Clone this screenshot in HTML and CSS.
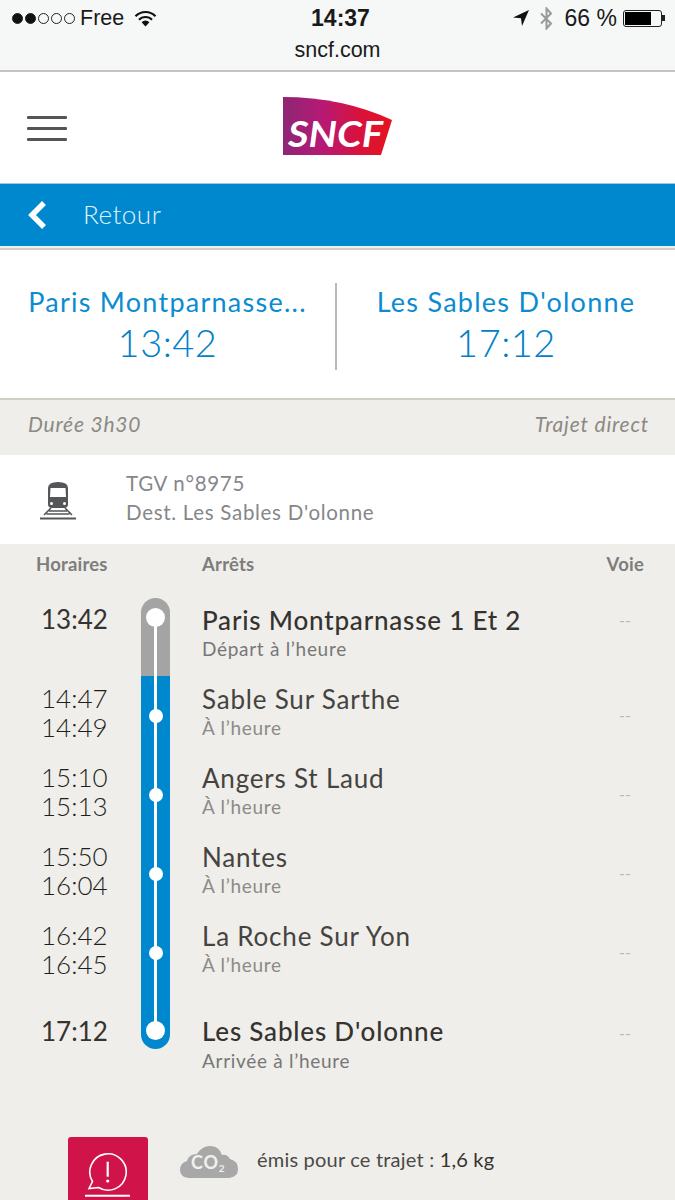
FILE: index.html
```html
<!DOCTYPE html>
<html lang="fr">

<head>
    <meta charset="UTF-8">
    <meta name="viewport" content="width=device-width, initial-scale=1.0">
    <title>SNCF - Retour</title>
    <link rel="stylesheet" href="styles.css">
</head>

<body>
    <div class="browserbar">
        <div class="statusline">
            <div class="statusleft">
                <span class="signal"><i class="on"></i><i class="on"></i><i></i><i></i><i></i></span>
                <span class="carrier">Free</span>
                <svg class="wifi" width="23" height="17" viewBox="0 0 23 17">
                    <path d="M1.500 6.200a14 14 0 0 1 20 0" fill="none" stroke="#111" stroke-width="2.200"/>
                    <path d="M5 9.800a9 9 0 0 1 13 0" fill="none" stroke="#111" stroke-width="2.200"/>
                    <path d="M7.600 12.200a5.400 5.400 0 0 1 7.800 0L11.500 16.500z" fill="#111"/>
                </svg>
            </div>
            <div class="clock">14:37</div>
            <div class="statusright">
                <svg width="16" height="16" viewBox="0 0 16 16"><path d="M16 0L0 7.500L8 8.200L9 16z" fill="#111"/></svg>
                <svg class="bluetooth" width="15" height="23" viewBox="0 0 15 23">
                    <path d="M2 6.500L12 16.500L7.500 21.500V1.500L12 6.500L2 16.500" fill="none" stroke="#999" stroke-width="2"/>
                </svg>
                <span class="percent">66 %</span>
                <div class="battery"><div class="batterylevel"></div></div>
                <div class="batterytip"></div>
            </div>
        </div>
        <div class="urlline">sncf.com</div>
    </div>

    <header class="siteheader">
        <div class="hamburger"><span></span><span></span><span></span></div>
        <svg class="logo" width="112" height="60" viewBox="0 0 112 60">
            <defs>
                <linearGradient id="logograd" x1="0" y1="0" x2="1" y2="0">
                    <stop offset="0" stop-color="#8e2673"/>
                    <stop offset="0.35" stop-color="#b41a76"/>
                    <stop offset="0.7" stop-color="#d9123c"/>
                    <stop offset="1" stop-color="#e4141e"/>
                </linearGradient>
            </defs>
            <path d="M1 1Q60 1 110 24L99 59H1z" fill="url(#logograd)"/>
            <text class="logotext" x="6" y="51" textLength="95" lengthAdjust="spacingAndGlyphs">SNCF</text>
        </svg>
    </header>

    <nav class="backbar">
        <svg width="20" height="30" viewBox="0 0 20 30">
            <path d="M17 3L5 15L17 27" fill="none" stroke="#fff" stroke-width="5.500"/>
        </svg>
        <span class="backtitle">Retour</span>
    </nav>

    <section class="summary">
        <div class="endpoint">
            <div class="endname">Paris Montparnasse...</div>
            <div class="endtime">13:42</div>
        </div>
        <div class="endpoint">
            <div class="endname">Les Sables D'olonne</div>
            <div class="endtime">17:12</div>
        </div>
    </section>

    <div class="durationband">
        <span>Durée 3h30</span>
        <span>Trajet direct</span>
    </div>

    <section class="traininfo">
        <svg class="trainicon" width="36" height="38" viewBox="0 0 36 38">
            <path d="M8 6Q8 0 18 0T28 6V22Q28 26 24 26H12Q8 26 8 22z" fill="#55565a"/>
            <path d="M10.500 6H25.500L26 15H10z" fill="#fff"/>
            <circle cx="11.500" cy="21.500" r="1.500" fill="#fff"/>
            <circle cx="24.500" cy="21.500" r="1.500" fill="#fff"/>
            <path d="M11 26L4 33M25 26L32 33M9 29H27M6.500 32H29.500" fill="none" stroke="#55565a" stroke-width="1.600"/>
            <path d="M0 36.500H36" stroke="#55565a" stroke-width="2"/>
        </svg>
        <div class="traintext">
            <div>TGV n°8975</div>
            <div>Dest. Les Sables D'olonne</div>
        </div>
    </section>

    <main class="timetable">
        <div class="tablehead">
            <div class="colhoraires">Horaires</div>
            <div class="colarrets">Arrêts</div>
            <div class="colvoie">Voie</div>
        </div>

        <div class="stop first">
            <div class="times"><div>13:42</div></div>
            <div class="track"><span class="dot big"></span></div>
            <div class="stopinfo"><div class="stopname strong">Paris Montparnasse 1 Et 2</div><div class="stopstate">Départ à l’heure</div></div>
            <div class="voie">--</div>
        </div>
        <div class="stop">
            <div class="times"><div>14:47</div><div>14:49</div></div>
            <div class="track"><span class="dot"></span></div>
            <div class="stopinfo"><div class="stopname">Sable Sur Sarthe</div><div class="stopstate">À l’heure</div></div>
            <div class="voie">--</div>
        </div>
        <div class="stop">
            <div class="times"><div>15:10</div><div>15:13</div></div>
            <div class="track"><span class="dot"></span></div>
            <div class="stopinfo"><div class="stopname">Angers St Laud</div><div class="stopstate">À l’heure</div></div>
            <div class="voie">--</div>
        </div>
        <div class="stop">
            <div class="times"><div>15:50</div><div>16:04</div></div>
            <div class="track"><span class="dot"></span></div>
            <div class="stopinfo"><div class="stopname">Nantes</div><div class="stopstate">À l’heure</div></div>
            <div class="voie">--</div>
        </div>
        <div class="stop">
            <div class="times"><div>16:42</div><div>16:45</div></div>
            <div class="track"><span class="dot"></span></div>
            <div class="stopinfo"><div class="stopname">La Roche Sur Yon</div><div class="stopstate">À l’heure</div></div>
            <div class="voie">--</div>
        </div>
        <div class="stop last">
            <div class="times"><div>17:12</div></div>
            <div class="track"><span class="dot big"></span></div>
            <div class="stopinfo"><div class="stopname strong">Les Sables D'olonne</div><div class="stopstate">Arrivée à l’heure</div></div>
            <div class="voie">--</div>
        </div>

        <div class="footerrow">
            <div class="alertbox">
                <svg width="50" height="48" viewBox="0 0 50 48">
                    <path d="M9.500 29.500L6 36.500L15.500 35.500A18.200 18.200 0 1 0 9.500 29.500z" fill="none" stroke="#fff" stroke-width="1.600"/>
                    <path d="M24.700 9.700V24.700" stroke="#fff" stroke-width="2.200"/>
                    <circle cx="24.700" cy="29" r="1.600" fill="#fff"/>
                    <path d="M2 43.700H47" stroke="#fff" stroke-width="2"/>
                </svg>
            </div>
            <div class="cloud">
                <svg width="58" height="32" viewBox="0 0 58 32">
                    <path d="M9 32Q0 31 0 24Q0 17 7 15Q9 8 17 8Q22 0 30 0Q39 0 42 9Q47 8 50 13Q58 15 58 23Q58 31 49 32z" fill="#a8a8a9"/>
                    <text class="cotext" x="11" y="23">CO<tspan class="cosub" dy="3">2</tspan></text>
                </svg>
            </div>
            <div class="emission">émis pour ce trajet : <span class="kg">1,6 kg</span></div>
        </div>
    </main>
</body>

</html>
```

FILE: styles.css
```css
* {
    box-sizing: border-box;
}

html,
body {
    margin: 0;
    height: 1200px;
    overflow: hidden;
}

body {
    font-family: "Lato", "Open Sans", sans-serif;
    background-color: #efeeea;
}

/* phone browser chrome */
.browserbar {
    height: 72px;
    background-color: #f6f7f7;
    border-bottom: 2px solid #c4c4c4;
    font-family: "Liberation Sans", Arial, sans-serif;
    color: #1a1a1a;
}

.statusline {
    height: 37px;
    padding-bottom: 1px;
    display: grid;
    grid-template-columns: 1fr auto 1fr;
    align-items: center;
    font-size: 21.500px;
}

.statusleft {
    padding-left: 12px;
    display: flex;
    align-items: center;
}

.signal {
    display: flex;
    gap: 2px;
}

.signal i {
    width: 11px;
    height: 11px;
    border-radius: 50%;
    border: 1px solid #222;
}

.signal i.on {
    background-color: #111;
}

.carrier {
    margin-left: 5px;
}

.wifi {
    margin-left: 10px;
}

.clock {
    margin-left: 6px;
    font-size: 23px;
    font-weight: bold;
}

.statusright {
    display: flex;
    align-items: center;
    justify-content: flex-end;
    padding-right: 10px;
}

.bluetooth {
    margin-left: 10px;
}

.percent {
    margin-left: 11px;
    font-size: 23px;
}

.battery {
    width: 39px;
    height: 17px;
    margin-left: 6px;
    padding: 1px;
    border: 1px solid #222;
    border-radius: 3px;
}

.batterylevel {
    width: 26px;
    height: 13px;
    background-color: #000;
}

.batterytip {
    width: 3px;
    height: 6px;
    background-color: #222;
}

.urlline {
    text-align: center;
    font-size: 21.500px;
    line-height: 26px;
}

/* site header */
.siteheader {
    height: 111px;
    padding-left: 27px;
    display: flex;
    align-items: center;
    background-color: #fff;
}

.hamburger {
    width: 40px;
    margin-top: 2px;
    display: flex;
    flex-direction: column;
    gap: 7.500px;
}

.hamburger span {
    height: 3.500px;
    border-radius: 1px;
    background-color: #555;
}

.logo {
    margin: 0 0 4px 215px;
}

.logotext {
    font-family: "Lato", sans-serif;
    font-weight: bold;
    font-style: italic;
    font-size: 37px;
    fill: #fff;
}

.backbar {
    height: 63px;
    padding-left: 27px;
    display: flex;
    align-items: center;
    gap: 36px;
    background-color: #0088cf;
    border-top: 1px solid #9cc8de;
}

.backtitle {
    margin-bottom: 2px;
    font-size: 26px;
    font-weight: 300;
    letter-spacing: 0.5px;
    color: #e3f3fb;
}

/* origin / destination */
.summary {
    height: 152px;
    padding-top: 33px;
    display: grid;
    grid-template-columns: 337px 1fr;
    background-color: #fff;
    border-top: 2px solid #d2cec6;
    border-bottom: 2px solid #d2cec6;
    margin-top: 2px;
    color: #0b8bd0;
}

.endpoint {
    height: 87px;
    text-align: center;
}

.endpoint:first-child {
    border-right: 2px solid #bdbab3;
}

.endname {
    font-size: 27px;
    line-height: 38px;
    letter-spacing: 1.250px;
}

.endtime {
    font-size: 38px;
    line-height: 42px;
    font-weight: 300;
    letter-spacing: 0.5px;
    color: #0080c8;
}

.durationband {
    height: 55px;
    padding: 0 26px 8px 28px;
    display: flex;
    align-items: center;
    justify-content: space-between;
    font-size: 21px;
    font-style: italic;
    letter-spacing: 0.8px;
    color: #8b8a85;
}

.traininfo {
    height: 89px;
    padding-left: 40px;
    display: flex;
    align-items: center;
    background-color: #fff;
}

.trainicon {
    margin-top: 3px;
}

.traintext {
    margin: 0 0 4px 50px;
    font-size: 20.500px;
    line-height: 29px;
    letter-spacing: 0.7px;
    color: #85878a;
}

/* stops table */
.timetable {
    color: #35332f;
}

.tablehead {
    height: 54px;
    padding-top: 8px;
    display: flex;
    font-size: 18.500px;
    line-height: 24px;
    font-weight: bold;
    letter-spacing: 0.2px;
    color: #7d7d7d;
}

.colhoraires {
    width: 202px;
    padding-left: 36px;
}

.colarrets {
    flex: 1;
}

.colvoie {
    padding-right: 31px;
}

.stop {
    height: 79px;
    display: flex;
}

.stop.first {
    height: 78px;
}

.stop.last {
    height: 57px;
}

.times {
    width: 141px;
    padding: 8px 0 0 41px;
    font-size: 26px;
    line-height: 29px;
    font-weight: 300;
    color: #1f1e1b;
}

.first .times {
    padding-top: 7px;
    font-weight: 400;
    color: #35332f;
}

.last .times {
    padding-top: 25px;
    font-weight: 400;
    color: #35332f;
}

/* the white rail is a background so it runs through the row */
.track {
    width: 29px;
    flex-shrink: 0;
    display: flex;
    flex-direction: column;
    align-items: center;
    padding-top: 33px;
    background: linear-gradient(#fff, #fff) center / 3px 100% no-repeat, #0088cf;
}

.first .track {
    padding-top: 10px;
    border-radius: 15px 15px 0 0;
    background: linear-gradient(#fff, #fff) center 20px / 3px 100% no-repeat, #a4a4a4;
}

.last .track {
    padding-top: 29px;
    border-radius: 0 0 15px 15px;
    background: linear-gradient(#fff, #fff) center top / 3px 40px no-repeat, #0088cf;
}

.dot {
    width: 14px;
    height: 14px;
    border-radius: 50%;
    background-color: #fff;
}

.dot.big {
    width: 19px;
    height: 19px;
}

.stopinfo {
    flex: 1;
    padding: 8px 0 0 32px;
}

.first .stopinfo {
    padding-top: 7px;
}

.last .stopinfo {
    padding-top: 24px;
}

.stopname {
    font-size: 26px;
    line-height: 30px;
    letter-spacing: 0.8px;
    color: #45433f;
}

.stopname.strong {
    font-weight: 500;
    color: #35332f;
}

.stopstate {
    font-size: 19px;
    line-height: 28px;
    letter-spacing: 0.7px;
    color: #8b8b88;
}

.first .stopstate,
.last .stopstate {
    color: #777;
}

.last .stopstate {
    margin-top: 1px;
}

.voie {
    width: 56px;
    padding-top: 29px;
    font-size: 16px;
    color: #b9b9b6;
}

.first .voie {
    padding-top: 12px;
}

.last .voie {
    padding-top: 31px;
}

.footerrow {
    padding: 88px 0 0 68px;
    display: flex;
}

.alertbox {
    width: 80px;
    height: 80px;
    padding: 15px 0 0 15px;
    border-radius: 3px;
    background-color: #d0144a;
}

.cloud {
    margin: 9px 0 0 32px;
}

.cotext {
    font-family: "Lato", sans-serif;
    font-weight: bold;
    font-size: 18px;
    letter-spacing: 0.8px;
    fill: #f1f0ed;
}

.cosub {
    font-size: 10px;
}

.emission {
    margin: 8px 0 0 19px;
    font-size: 20px;
    line-height: 28px;
    letter-spacing: 0.2px;
    color: #4a4a48;
}

.kg {
    color: #35332f;
}
```
